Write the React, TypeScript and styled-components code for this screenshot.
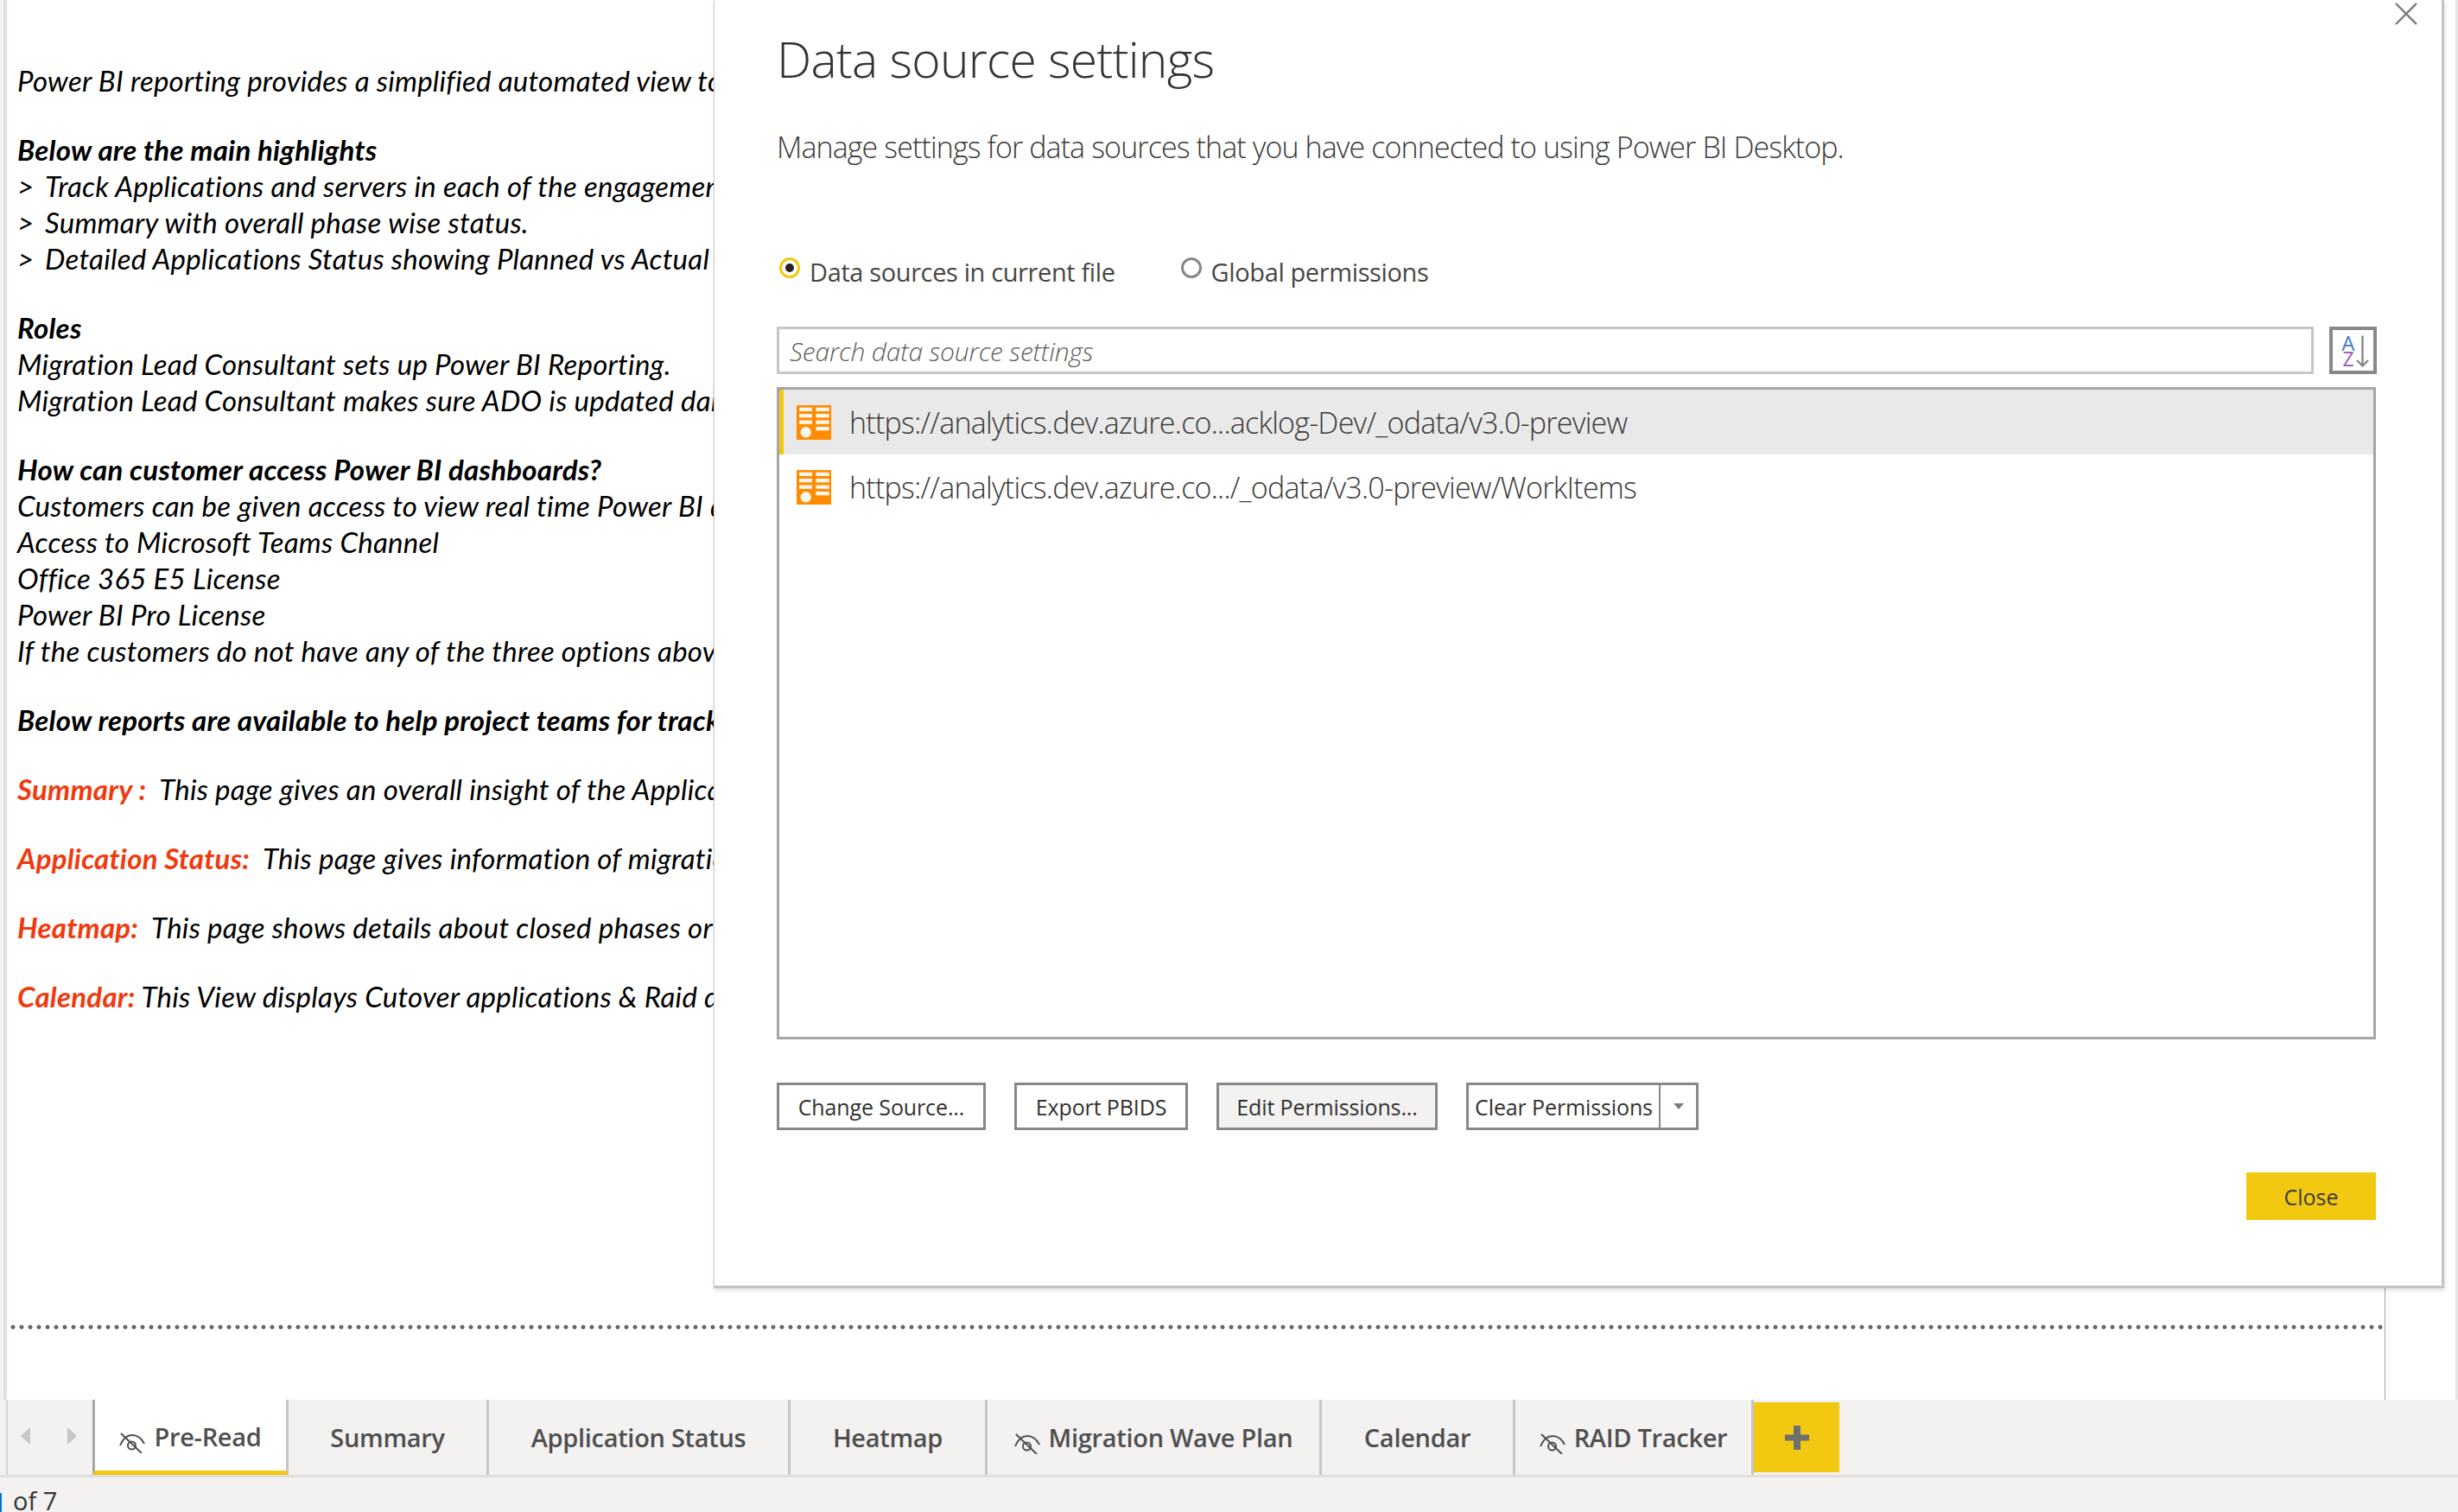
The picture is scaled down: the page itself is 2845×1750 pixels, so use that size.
import styled, { createGlobalStyle } from 'styled-components';

const UI_FONT = `"Open Sans", "Noto Sans", sans-serif`;
const YELLOW = '#f2c811';

type Line = { text: string; lead?: string; kind?: 'plain' | 'bold'; bullet?: boolean };

const REPORT_TEXT: Line[][] = [
  [{ text: 'Power BI reporting provides a simplified automated view to track the migration' }],
  [
    { text: 'Below are the main highlights', kind: 'bold' },
    { bullet: true, text: 'Track Applications and servers in each of the engagement phases' },
    { bullet: true, text: 'Summary with overall phase wise status.' },
    { bullet: true, text: 'Detailed Applications Status showing Planned vs Actual dates' },
  ],
  [
    { text: 'Roles', kind: 'bold' },
    { text: 'Migration Lead Consultant sets up Power BI Reporting.' },
    { text: 'Migration Lead Consultant makes sure ADO is updated daily' },
  ],
  [
    { text: 'How can customer access Power BI dashboards?', kind: 'bold' },
    { text: 'Customers can be given access to view real time Power BI dashboards' },
    { text: 'Access to Microsoft Teams Channel' },
    { text: 'Office 365 E5 License' },
    { text: 'Power BI Pro License' },
    { text: 'If the customers do not have any of the three options above' },
  ],
  [{ text: 'Below reports are available to help project teams for tracking', kind: 'bold' }],
  [{ lead: 'Summary :', text: '  This page gives an overall insight of the Applications' }],
  [{ lead: 'Application Status:', text: '  This page gives information of migration' }],
  [{ lead: 'Heatmap:', text: '  This page shows details about closed phases or' }],
  [{ lead: 'Calendar:', text: ' This View displays Cutover applications & Raid data' }],
];

const TABS = [
  { name: 'Pre-Read', width: 227, hidden: true, active: true },
  { name: 'Summary', width: 232 },
  { name: 'Application Status', width: 349 },
  { name: 'Heatmap', width: 228 },
  { name: 'Migration Wave Plan', width: 387, hidden: true },
  { name: 'Calendar', width: 224 },
  { name: 'RAID Tracker', width: 276, hidden: true },
];

const SOURCES = [
  { url: 'https://analytics.dev.azure.co...acklog-Dev/_odata/v3.0-preview', selected: true },
  { url: 'https://analytics.dev.azure.co.../_odata/v3.0-preview/WorkItems' },
];

function HiddenEye() {
  return (
    <EyeSvg viewBox="0 0 30 24" fill="none" stroke="#4f4f4f" strokeWidth="2">
      <path d="M1 15C5 5 11 3 15 3s10 2 14 10" />
      <circle cx="14.5" cy="15" r="4.5" />
      <path d="M2 1l24 23" />
    </EyeSvg>
  );
}

function TableIcon() {
  return (
    <svg width="40" height="40" viewBox="0 0 40 40">
      <rect width="40" height="40" fill="#ff8c00" />
      <g fill="#fff" opacity="0.92">
        <rect x="3" y="2.7" width="15" height="4.3" />
        <rect x="3" y="10" width="15" height="4.3" />
        <rect x="3" y="17.5" width="15" height="4.3" />
        <rect x="22.3" y="2.7" width="15.4" height="4.3" />
        <rect x="22.3" y="10" width="15.4" height="4.3" />
        <rect x="22.3" y="17.5" width="15.4" height="4.3" />
        <rect x="22.3" y="25" width="15.4" height="4.3" />
        <circle cx="10.7" cy="31.3" r="6.2" />
      </g>
    </svg>
  );
}

function SortIcon() {
  return (
    <svg width="40" height="40" viewBox="0 0 40 40" fill="none">
      <text x="14" y="19.5" textAnchor="middle" fontFamily="Noto Sans" fontSize="24" fill="#4a86c5">A</text>
      <text x="14" y="37.5" textAnchor="middle" fontFamily="Noto Sans" fontSize="23" fill="#a45fbe">Z</text>
      <path d="M30.5 2.5v35M24 31l6.5 6.5L37 31" stroke="#8a8886" strokeWidth="2.4" />
    </svg>
  );
}

export default function App() {
  return (
    <>
      <GlobalStyle />
      <Page>
        <Main>
          <Canvas>
            <ReportText>
              {REPORT_TEXT.map((para, i) => (
                <Paragraph key={i}>
                  {para.map((line, j) => (
                    <TextLine key={j} $bold={line.kind === 'bold'}>
                      {line.bullet && <Bullet>&gt;</Bullet>}
                      {line.lead && <Lead>{line.lead}</Lead>}
                      {line.text}
                    </TextLine>
                  ))}
                </Paragraph>
              ))}
            </ReportText>
            <DottedRule />
          </Canvas>
        </Main>

        <TabBar>
          <TabNav>
            <NavArrow $dir="left" />
            <NavArrow $dir="right" />
          </TabNav>
          {TABS.map((tab) => (
            <Tab key={tab.name} $active={tab.active} $width={tab.width}>
              {tab.hidden && <HiddenEye />}
              {tab.name}
            </Tab>
          ))}
          <AddTab>
            <svg width="28" height="28" viewBox="0 0 28 28" fill="#6e6e6e">
              <rect x="10" width="8" height="28" />
              <rect y="10.5" width="28" height="7" />
            </svg>
          </AddTab>
        </TabBar>

        <StatusBar>of 7</StatusBar>

        <Dialog>
          <CloseX viewBox="0 0 26 26" stroke="#7a7a7a" strokeWidth="2.4">
            <path d="M1 1l24 24M25 1L1 25" />
          </CloseX>
          <Title>Data source settings</Title>
          <Subtitle>Manage settings for data sources that you have connected to using Power BI Desktop.</Subtitle>

          <RadioRow>
            <RadioOption>
              <Radio $checked />
              Data sources in current file
            </RadioOption>
            <RadioOption>
              <Radio />
              Global permissions
            </RadioOption>
          </RadioRow>

          <SearchRow>
            <SearchBox>Search data source settings</SearchBox>
            <SortButton>
              <SortIcon />
            </SortButton>
          </SearchRow>

          <SourceList>
            {SOURCES.map((source) => (
              <SourceRow key={source.url} $selected={source.selected}>
                <TableIcon />
                {source.url}
              </SourceRow>
            ))}
          </SourceList>

          <ButtonRow>
            <Button $width={242}>Change Source...</Button>
            <Button $width={201}>Export PBIDS</Button>
            <Button $width={256} $hover>Edit Permissions...</Button>
            <SplitButton>
              <SplitLabel>Clear Permissions</SplitLabel>
              <SplitCaret />
            </SplitButton>
          </ButtonRow>

          <Footer>
            <CloseButton>Close</CloseButton>
          </Footer>
        </Dialog>
      </Page>
    </>
  );
}

const GlobalStyle = createGlobalStyle`
  html, body {
    margin: 0;
    padding: 0;
    background: #fff;
  }
  * {
    box-sizing: border-box;
  }
`;

const Page = styled.div`
  position: relative;
  width: 2845px;
  height: 1750px;
  overflow: hidden;
  display: flex;
  flex-direction: column;
  font-family: ${UI_FONT};
`;

const Main = styled.div`
  height: 1620px;
  padding-left: 8px;
  padding-right: 3px;
  background: #fff;
  box-shadow: inset 4px 0 0 #f3f2f1, inset 8px 0 0 #e3e1df, inset -3px 0 0 #e6e6e6;
`;

const Canvas = styled.div`
  width: 2753px;
  height: 100%;
  border-right: 1px solid #a0a0a0;
  display: flex;
  flex-direction: column;
`;

const ReportText = styled.div`
  width: 818px;
  padding: 72px 0 0 12px;
  overflow: hidden;
  display: flex;
  flex-direction: column;
  gap: 38px;
  font-family: Lato, "Open Sans", sans-serif;
  font-size: 33px;
  letter-spacing: 0.24px;
  font-style: italic;
  color: #000;
`;

const Paragraph = styled.div`
  display: flex;
  flex-direction: column;
`;

const TextLine = styled.div<{ $bold?: boolean }>`
  height: 42px;
  line-height: 42px;
  white-space: pre;
  font-weight: ${(p) => (p.$bold ? 700 : 400)};
`;

const Bullet = styled.span`
  display: inline-block;
  width: 32px;
`;

const Lead = styled.span`
  color: #f03a0e;
  font-weight: 700;
`;

const DottedRule = styled.div`
  margin-top: auto;
  margin-bottom: 81px;
  margin-left: 2px;
  height: 6px;
  background-image: radial-gradient(circle at center, #666 2.2px, transparent 2.8px);
  background-size: 10px 6px;
`;

const TabBar = styled.div`
  height: 90px;
  display: flex;
  background: #f3f2f1;
  border-bottom: 3px solid #e1dfdd;
  padding-left: 7px;
`;

const TabNav = styled.div`
  width: 100px;
  display: flex;
  align-items: center;
  justify-content: space-between;
  padding: 0 18px 4px 15px;
  border-left: 2px solid #d8d6d4;
`;

const NavArrow = styled.span<{ $dir: 'left' | 'right' }>`
  width: 0;
  height: 0;
  border-top: 10px solid transparent;
  border-bottom: 10px solid transparent;
  ${(p) =>
    p.$dir === 'left' ? 'border-right: 11px solid #c8c6c4;' : 'border-left: 11px solid #c8c6c4;'}
`;

const Tab = styled.div<{ $active?: boolean; $width: number }>`
  width: ${(p) => p.$width}px;
  display: flex;
  align-items: center;
  justify-content: center;
  gap: 10px;
  font-size: 29px;
  font-weight: 600;
  letter-spacing: -0.3px;
  color: #4f4f4f;
  white-space: nowrap;
  border-right: 3px solid #c8c6c4;
  ${(p) =>
    p.$active &&
    `
    background: #fff;
    border-left: 3px solid #a8a8a8;
    border-bottom: 5px solid ${YELLOW};
    padding-top: 3px;
  `}
`;

const EyeSvg = styled.svg`
  width: 30px;
  height: 24px;
  margin-top: 14px;
  flex-shrink: 0;
`;

const AddTab = styled.div`
  width: 99px;
  height: 81px;
  margin-top: 3px;
  background: ${YELLOW};
  display: flex;
  align-items: center;
  justify-content: center;
`;

const StatusBar = styled.div`
  position: relative;
  height: 40px;
  padding-left: 15px;
  background: #f3f2f1;
  font-size: 29px;
  line-height: 54px;
  color: #333;
  overflow: hidden;

  &::before {
    content: '';
    position: absolute;
    left: 0;
    top: 18px;
    bottom: 0;
    width: 2px;
    background: #0078d4;
  }
`;

const Dialog = styled.div`
  position: absolute;
  top: 0;
  left: 826px;
  width: 2003px;
  height: 1491px;
  padding: 0 75px 0 72px;
  background: #fff;
  border-left: 1px solid #c8c8c8;
  border-right: 3px solid #c4c4c4;
  border-bottom: 3px solid #c4c4c4;
  box-shadow: 1px 3px 5px rgba(0, 0, 0, 0.12);
  display: flex;
  flex-direction: column;
`;

const CloseX = styled.svg`
  position: absolute;
  top: 3px;
  right: 28px;
  width: 26px;
  height: 26px;
`;

const Title = styled.h1`
  margin: 26px 0 0;
  font-size: 57px;
  line-height: 84px;
  font-weight: 300;
  letter-spacing: -0.8px;
  color: #333;
`;

const Subtitle = styled.p`
  margin: 37px 0 0;
  font-size: 34px;
  line-height: 46px;
  font-weight: 300;
  letter-spacing: -0.9px;
  color: #3b3a39;
  white-space: nowrap;
`;

const RadioRow = styled.div`
  margin-top: 96px;
  padding-left: 3px;
  display: flex;
  gap: 76px;
  height: 50px;
  align-items: center;
`;

const RadioOption = styled.label`
  display: flex;
  align-items: center;
  gap: 11px;
  font-size: 29px;
  letter-spacing: -0.38px;
  color: #484644;
`;

const Radio = styled.span<{ $checked?: boolean }>`
  width: 24px;
  height: 24px;
  margin-top: -8px;
  border-radius: 50%;
  border: 3px solid ${(p) => (p.$checked ? YELLOW : '#8a8886')};
  display: flex;
  align-items: center;
  justify-content: center;
  &::after {
    content: '';
    width: 10px;
    height: 10px;
    border-radius: 50%;
    background: ${(p) => (p.$checked ? '#222' : 'transparent')};
  }
`;

const SearchRow = styled.div`
  margin-top: 39px;
  display: flex;
  gap: 18px;
  height: 55px;
`;

const SearchBox = styled.div`
  flex: 1;
  border: 3px solid #c6c6c6;
  padding-left: 12px;
  font-size: 30px;
  letter-spacing: -0.2px;
  line-height: 51px;
  font-style: italic;
  font-weight: 300;
  color: #605e5c;
`;

const SortButton = styled.div`
  width: 55px;
  border: 4px solid #8a8886;
  display: flex;
  align-items: center;
  justify-content: center;
`;

const SourceList = styled.div`
  margin: 15px 1px 0 0;
  height: 755px;
  border: 3px solid #a6a6a6;
`;

const SourceRow = styled.div<{ $selected?: boolean }>`
  height: 75px;
  display: flex;
  align-items: center;
  gap: 21px;
  padding-left: ${(p) => (p.$selected ? '15px' : '20px')};
  font-size: 34px;
  letter-spacing: -0.75px;
  font-weight: 300;
  color: #3b3a39;
  white-space: nowrap;
  ${(p) =>
    p.$selected &&
    `
    background: #e9e9e9;
    border-left: 5px solid ${YELLOW};
  `}
`;

const ButtonRow = styled.div`
  margin-top: 50px;
  display: flex;
  gap: 33px;
`;

const Button = styled.div<{ $width: number; $hover?: boolean }>`
  width: ${(p) => p.$width}px;
  height: 55px;
  border: 3px solid #8a8886;
  background: ${(p) => (p.$hover ? '#f3f2f1' : '#fff')};
  display: flex;
  align-items: center;
  justify-content: center;
  font-size: 25px;
  letter-spacing: -0.12px;
  color: #323130;
  white-space: nowrap;
`;

const SplitButton = styled.div`
  width: 269px;
  height: 55px;
  border: 3px solid #8a8886;
  display: flex;
  font-size: 25px;
  letter-spacing: -0.12px;
  color: #323130;
`;

const SplitLabel = styled.div`
  flex: 1;
  display: flex;
  align-items: center;
  justify-content: center;
  white-space: nowrap;
  border-right: 2px solid #8a8886;
`;

const SplitCaret = styled.div`
  width: 41px;
  display: flex;
  align-items: center;
  justify-content: center;
  &::after {
    content: '';
    border-left: 6px solid transparent;
    border-right: 6px solid transparent;
    border-top: 7px solid #7a7a7a;
  }
`;

const Footer = styled.div`
  margin-top: 49px;
  padding-right: 1px;
  display: flex;
  justify-content: flex-end;
`;

const CloseButton = styled.div`
  width: 150px;
  height: 55px;
  background: ${YELLOW};
  display: flex;
  align-items: center;
  justify-content: center;
  font-size: 25px;
  color: #3b3a39;
`;
